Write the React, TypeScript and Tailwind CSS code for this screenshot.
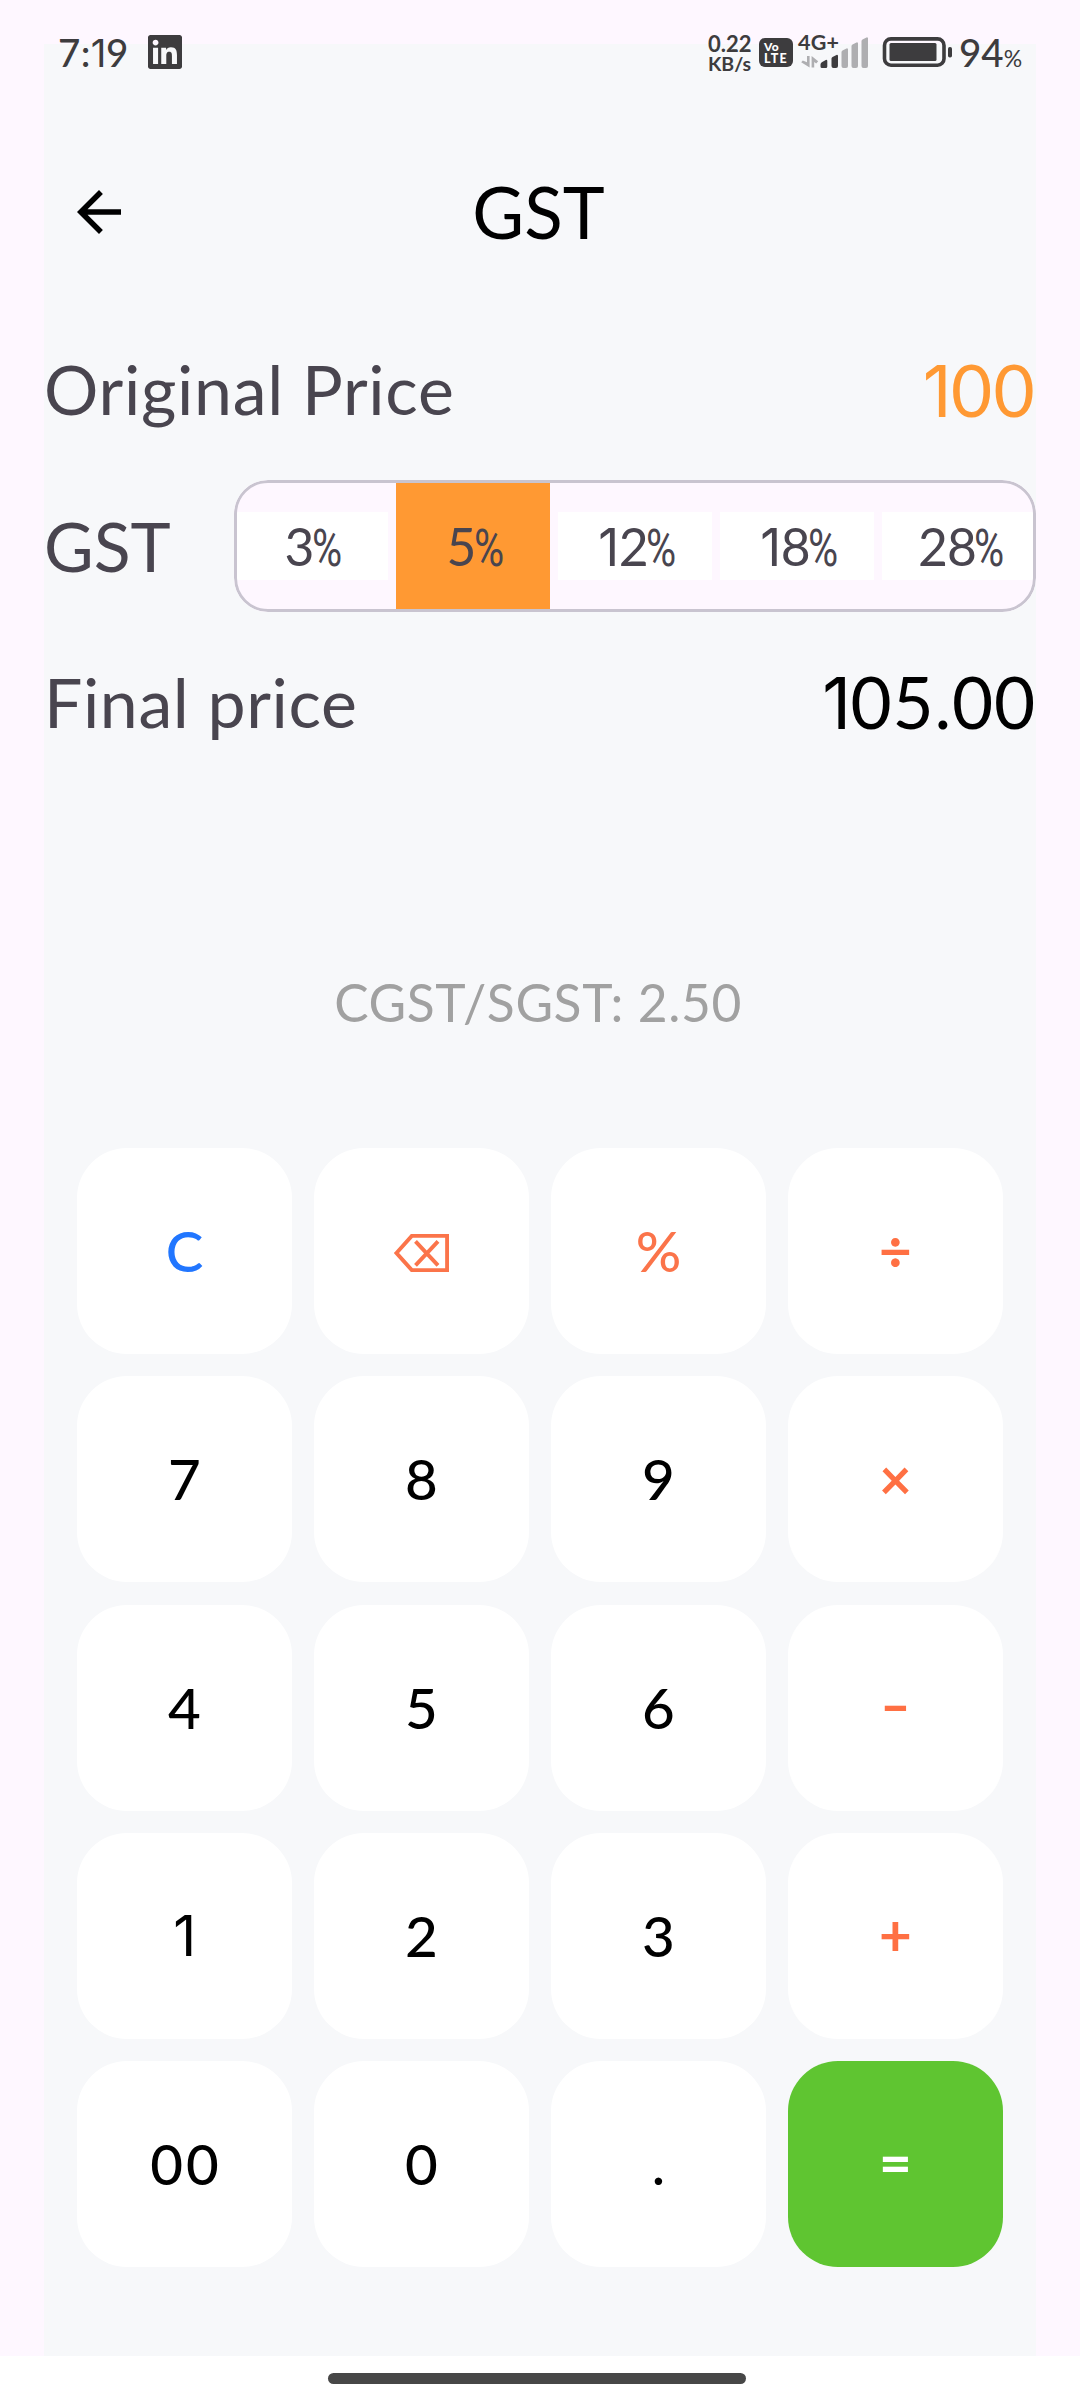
import React from 'react';

const RATES = ['3%', '5%', '12%', '18%', '28%'];

type Key = { label: string; tone?: string };

const KEYS: Key[] = [
  { label: 'C', tone: 'text-[#2176ff] font-medium' },
  { label: 'back', tone: 'text-[#fb744a]' },
  { label: '%', tone: 'text-[#fb744a] font-medium' },
  { label: '÷', tone: 'text-[#ff7043] font-bold' },
  { label: '7' },
  { label: '8' },
  { label: '9' },
  { label: '×', tone: 'text-[#ff7043] font-bold' },
  { label: '4' },
  { label: '5' },
  { label: '6' },
  { label: '−', tone: 'text-[#ff7043] font-bold' },
  { label: '1' },
  { label: '2' },
  { label: '3' },
  { label: '+', tone: 'text-[#ff7043] font-bold' },
  { label: '00' },
  { label: '0' },
  { label: '.' },
  { label: '=', tone: 'text-white font-bold' },
];

// Digits in Lato, with a plain-stemmed "1" and, when asked for, a condensed percent sign.
function Num({ children, narrowPercent = false }: { children: string; narrowPercent?: boolean }) {
  return (
    <>
      {children.split('').map((ch, i) => {
        if (ch === '1')
          return (
            <span key={i} className="font-['Inter',sans-serif] font-normal tracking-[-0.01em]">
              1
            </span>
          );
        if (ch === '%' && narrowPercent)
          return (
            <span
              key={i}
              className="ml-[-2px] inline-block w-[28px] origin-left scale-x-[0.8] font-['Roboto',sans-serif]"
            >
              %
            </span>
          );
        return <React.Fragment key={i}>{ch}</React.Fragment>;
      })}
    </>
  );
}

function BackspaceIcon() {
  return (
    <svg width="55" height="38" viewBox="0 0 55 38" fill="none" stroke="currentColor" strokeWidth="3.9" className="mt-[3px]">
      <path d="M2.5 19 17.8 1.9H53.1V36.1H17.8Z" />
      <path d="M21.5 7.3 44 31.3M44 7.3 21.5 31.3" />
    </svg>
  );
}

function StatusBar() {
  return (
    <div className="flex h-[104px] shrink-0 items-start justify-between pl-[58px] pr-[57px] text-[#3d3c3e]">
      <div className="flex pt-[35px]">
        <div className="h-[34px] w-[90px] text-[38.5px] font-medium leading-[34px] tracking-[0.3px]">
          <Num>7:19</Num>
        </div>
        <svg width="34" height="34" viewBox="0 0 24 24" fill="currentColor">
          <path d="M20.447 20.452h-3.554v-5.569c0-1.328-.027-3.037-1.852-3.037-1.853 0-2.136 1.445-2.136 2.939v5.667H9.351V9h3.414v1.561h.046c.477-.9 1.637-1.85 3.37-1.85 3.601 0 4.267 2.37 4.267 5.455v6.286zM5.337 7.433c-1.144 0-2.063-.926-2.063-2.065 0-1.138.92-2.063 2.063-2.063 1.14 0 2.064.925 2.064 2.063 0 1.139-.925 2.065-2.064 2.065zm1.782 13.019H3.555V9h3.564v11.452zM22.225 0H1.771C.792 0 0 .774 0 1.729v20.542C0 23.227.792 24 1.771 24h20.451C23.2 24 24 23.227 24 22.271V1.729C24 .774 23.2 0 22.222 0h.003z" />
        </svg>
      </div>
      <div className="flex items-start">
        <div className="flex w-[51px] flex-col pt-[34px] font-bold">
          <span className="text-[22px] leading-[20px]">0.22</span>
          <span className="text-[19.5px] leading-[19px]">KB/s</span>
        </div>
        <div className="mt-[38px] flex h-[29px] w-[34px] flex-col rounded-[6px] bg-[#3d3c3e] pl-[5px] pt-[3px] font-black text-white">
          <span className="text-[12px] leading-[12px] tracking-[0.4px]">Vo</span>
          <span className="text-[12.5px] leading-[12px] tracking-[1.3px]">LTE</span>
        </div>
        <div className="ml-[5px] flex w-[84px] flex-col pt-[34px]">
          <div className="relative h-[35px]">
            <span className="absolute left-0 top-0 text-[21.5px] font-bold leading-[17px] tracking-[0.2px]">4G+</span>
            <svg width="74" height="34" viewBox="0 0 74 34" className="absolute left-0 top-0">
              <g fill="#aeaeb1">
                <path d="M9 22h2.6v11.5L3.2 28.2l1.6-1.6L9 28.2Z" />
                <path d="M13.6 22 20.2 27.2 18.2 29.4 16.2 28V33.5H13.6Z" />
                <path d="M43.5 18a2 2 0 0 1 1-1.6l4-2a1 1 0 0 1 1.5 1V32a2 2 0 0 1-2 2h-2.5a2 2 0 0 1-2-2Z" />
                <path d="M53.5 12a2 2 0 0 1 1-1.6l4-2a1 1 0 0 1 1.5 1V32a2 2 0 0 1-2 2h-2.5a2 2 0 0 1-2-2Z" />
                <path d="M63.5 7a2 2 0 0 1 1-1.6l4-2a1 1 0 0 1 1.5 1V32a2 2 0 0 1-2 2h-2.5a2 2 0 0 1-2-2Z" />
              </g>
              <path d="M22.5 30.5a3 3 0 0 1 1.3-2.3l4-2.2a1 1 0 0 1 1.5 1V32.5a1.5 1.5 0 0 1-1.5 1.5h-3.8a1.5 1.5 0 0 1-1.5-1.5Z" fill="currentColor" />
              <path d="M33.5 24.5a2 2 0 0 1 1-1.6l4-2a1 1 0 0 1 1.5 1V32a2 2 0 0 1-2 2h-2.5a2 2 0 0 1-2-2Z" fill="currentColor" />
            </svg>
          </div>
        </div>
        <svg width="70" height="30" viewBox="0 0 70 30" className="mt-[37px]" fill="currentColor">
          <rect x="2.5" y="1.9" width="59.5" height="26.3" rx="6.5" fill="none" stroke="currentColor" strokeWidth="3.6" />
          <rect x="7.5" y="6" width="47" height="18" rx="1.5" />
          <rect x="66" y="10" width="4" height="10.5" rx="1.8" />
        </svg>
        <div className="ml-[7px] flex w-[64px] items-baseline pt-[35px] leading-[34px]">
          <span className="text-[38.5px] font-medium">94</span>
          <span className="text-[23px] leading-[20px]">%</span>
        </div>
      </div>
    </div>
  );
}

export default function App() {
  return (
    <div className="relative flex h-[2400px] w-[1080px] flex-col overflow-hidden bg-[#fef7ff] font-['Lato',sans-serif]">
      <div className="absolute left-[44px] top-[44px] h-[2312px] w-[992px] bg-[#f7f8fa]" />
      <div className="relative flex h-full flex-col">
        <StatusBar />

        <header className="mx-[44px] grid h-[208px] grid-cols-[88px_1fr_88px] items-center pl-[22px] pr-[22px] pt-[8px]">
          <svg width="66" height="66" viewBox="0 0 24 24" fill="#000">
            <path d="M20 11H7.83l5.59-5.59L12 4l-8 8 8 8 1.41-1.41L7.83 13H20v-2z" />
          </svg>
          <h1 className="pr-[3px] text-center text-[71px] leading-[80px] text-black">GST</h1>
        </header>

        <main className="mx-[44px] flex flex-col">
          <div className="flex h-[156px] items-center justify-between">
            <span className="pb-[2px] text-[68px] leading-[80px] tracking-[0.7px] text-[#49454f]">Original Price</span>
            <span className="text-[71px] leading-[80px] tracking-[1.3px] text-[#ff9933]">
              <Num>100</Num>
            </span>
          </div>

          <div className="flex h-[156px] items-center justify-between">
            <span className="pb-[1px] text-[68px] leading-[80px] text-[#49454f]">GST</span>
            <div className="relative h-[132px] w-[802px] overflow-hidden rounded-[34px] bg-[#fef7ff]">
              <div className="grid h-full grid-cols-5 items-center gap-[8px]">
                {RATES.map((rate) => (
                  <div
                    key={rate}
                    className={
                      rate === '5%'
                        ? 'flex h-full items-center justify-center bg-[#ff9933] pl-[2px] pt-[2px] text-[#49454f]'
                        : 'flex h-[68px] items-center justify-center bg-white pl-[2px] pt-[2px] text-[#49454f]'
                    }
                  >
                    <span className="text-[51.5px] leading-[60px] tracking-[-0.8px]">
                      <Num narrowPercent>{rate}</Num>
                    </span>
                  </div>
                ))}
              </div>
              <div className="absolute inset-0 rounded-[34px] border-[3px] border-[#c9c4d0]" />
            </div>
          </div>

          <div className="flex h-[156px] items-center justify-between">
            <span className="pb-[1px] text-[68px] leading-[80px] tracking-[0.6px] text-[#49454f]">Final price</span>
            <span className="text-[71px] leading-[80px] tracking-[0.8px] text-black">
              <Num>105.00</Num>
            </span>
          </div>

          <p className="mt-[192px] pr-[4px] text-center text-[51.5px] leading-[60px] tracking-[0.6px] text-[#a1a1a1]">
            CGST/SGST: 2.50
          </p>
        </main>

        <section className="mx-[77px] mt-[116px] grid grid-cols-[repeat(4,215px)] gap-x-[22px] gap-y-[22.25px]">
          {KEYS.map(({ label, tone }) => (
            <button
              key={label}
              className={`flex h-[206px] items-center justify-center rounded-[50px] text-[56.5px] leading-[68px] ${
                label === '=' ? 'bg-[#5fc531]' : 'bg-white'
              } ${tone ?? 'text-black font-medium'} ${label === '00' ? 'tracking-[3px] pl-[3px]' : ''}`}
            >
              {label === 'back' ? (
                <BackspaceIcon />
              ) : (
                <span
                  className={
                    label === '−'
                      ? 'block scale-x-[0.85] pb-[4px]'
                      : label === '+' || label === '='
                        ? 'block pb-[4px]'
                        : 'block pb-[2px]'
                  }
                >
                  <Num>{label}</Num>
                </span>
              )}
            </button>
          ))}
        </section>

        <footer className="mt-auto flex h-[44px] shrink-0 justify-center bg-white pt-[17px]">
          <div className="mr-[6px] h-[10.5px] w-[418px] rounded-full bg-[#474747]" />
        </footer>
      </div>
    </div>
  );
}
